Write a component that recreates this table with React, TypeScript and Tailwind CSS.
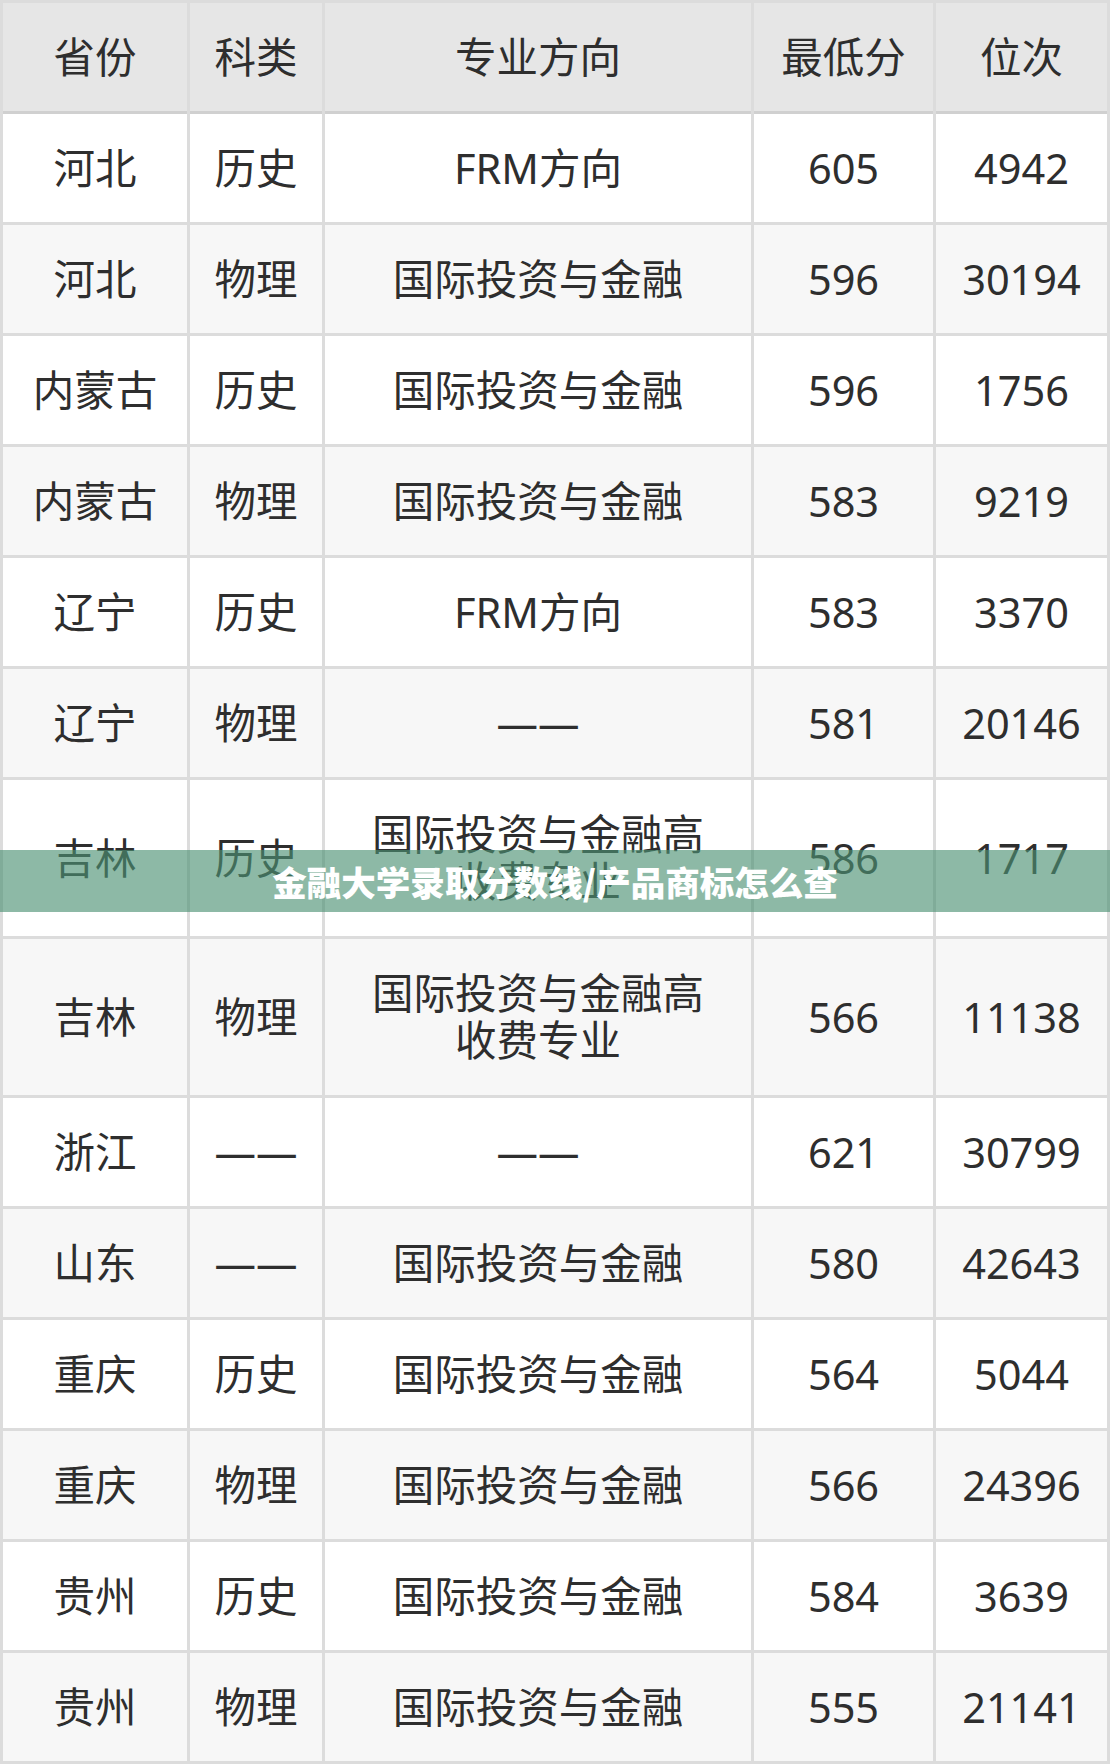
import React from "react";

type Row = {
    province: string;
    subject: string;
    major: string;
    score: string;
    rank: string;
    tall?: boolean;
};

const rows: Row[] = [
    { province: "河北", subject: "历史", major: "FRM方向", score: "605", rank: "4942" },
    { province: "河北", subject: "物理", major: "国际投资与金融", score: "596", rank: "30194" },
    { province: "内蒙古", subject: "历史", major: "国际投资与金融", score: "596", rank: "1756" },
    { province: "内蒙古", subject: "物理", major: "国际投资与金融", score: "583", rank: "9219" },
    { province: "辽宁", subject: "历史", major: "FRM方向", score: "583", rank: "3370" },
    { province: "辽宁", subject: "物理", major: "——", score: "581", rank: "20146" },
    { province: "吉林", subject: "历史", major: "国际投资与金融高\n收费专业", score: "586", rank: "1717", tall: true },
    { province: "吉林", subject: "物理", major: "国际投资与金融高\n收费专业", score: "566", rank: "11138", tall: true },
    { province: "浙江", subject: "——", major: "——", score: "621", rank: "30799" },
    { province: "山东", subject: "——", major: "国际投资与金融", score: "580", rank: "42643" },
    { province: "重庆", subject: "历史", major: "国际投资与金融", score: "564", rank: "5044" },
    { province: "重庆", subject: "物理", major: "国际投资与金融", score: "566", rank: "24396" },
    { province: "贵州", subject: "历史", major: "国际投资与金融", score: "584", rank: "3639" },
    { province: "贵州", subject: "物理", major: "国际投资与金融", score: "555", rank: "21141" },
];

const headers = ["省份", "科类", "专业方向", "最低分", "位次"];

function Cell({ text, bg, tall }: { text: string; bg: string; tall?: boolean }) {
    return (
        <div
            className={`${bg} ${tall ? "h-[156px]" : "h-[108px]"} flex items-center justify-center text-center whitespace-pre-line leading-[47px]`}
        >
            {text}
        </div>
    );
}

export default function App() {
    return (
        <div
            className="relative w-[1110px] h-[1764px] overflow-hidden bg-white text-[41.5px] text-[#2e2e2e]"
            style={{ fontFamily: '"Noto Sans", "Noto Sans CJK SC", sans-serif' }}
        >
            <div className="grid grid-cols-[184px_132px_426px_179px_171px] gap-[3px] p-[3px] bg-[#dcdcdc]">
                {headers.map((h) => (
                    <Cell key={h} text={h} bg="bg-[#e6e6e6] shadow-[0_3px_0_#d0d0d0]" />
                ))}
                {rows.map((r, i) => {
                    const bg = i % 2 === 0 ? "bg-white" : "bg-[#f7f7f7]";
                    return (
                        <React.Fragment key={i}>
                            <Cell text={r.province} bg={bg} tall={r.tall} />
                            <Cell text={r.subject} bg={bg} tall={r.tall} />
                            <Cell text={r.major} bg={bg} tall={r.tall} />
                            <Cell text={r.score} bg={bg} tall={r.tall} />
                            <Cell text={r.rank} bg={bg} tall={r.tall} />
                        </React.Fragment>
                    );
                })}
            </div>

            {/* title banner over the table */}
            <div className="absolute left-0 right-0 top-[850px] h-[62px] bg-[rgba(76,145,115,0.64)] flex items-center justify-center">
                <span
                    className="text-white text-[34.5px] font-black leading-none"
                    style={{ fontFamily: '"Noto Sans CJK SC", sans-serif' }}
                >
                    金融大学录取分数线/产品商标怎么查
                </span>
            </div>
        </div>
    );
}
